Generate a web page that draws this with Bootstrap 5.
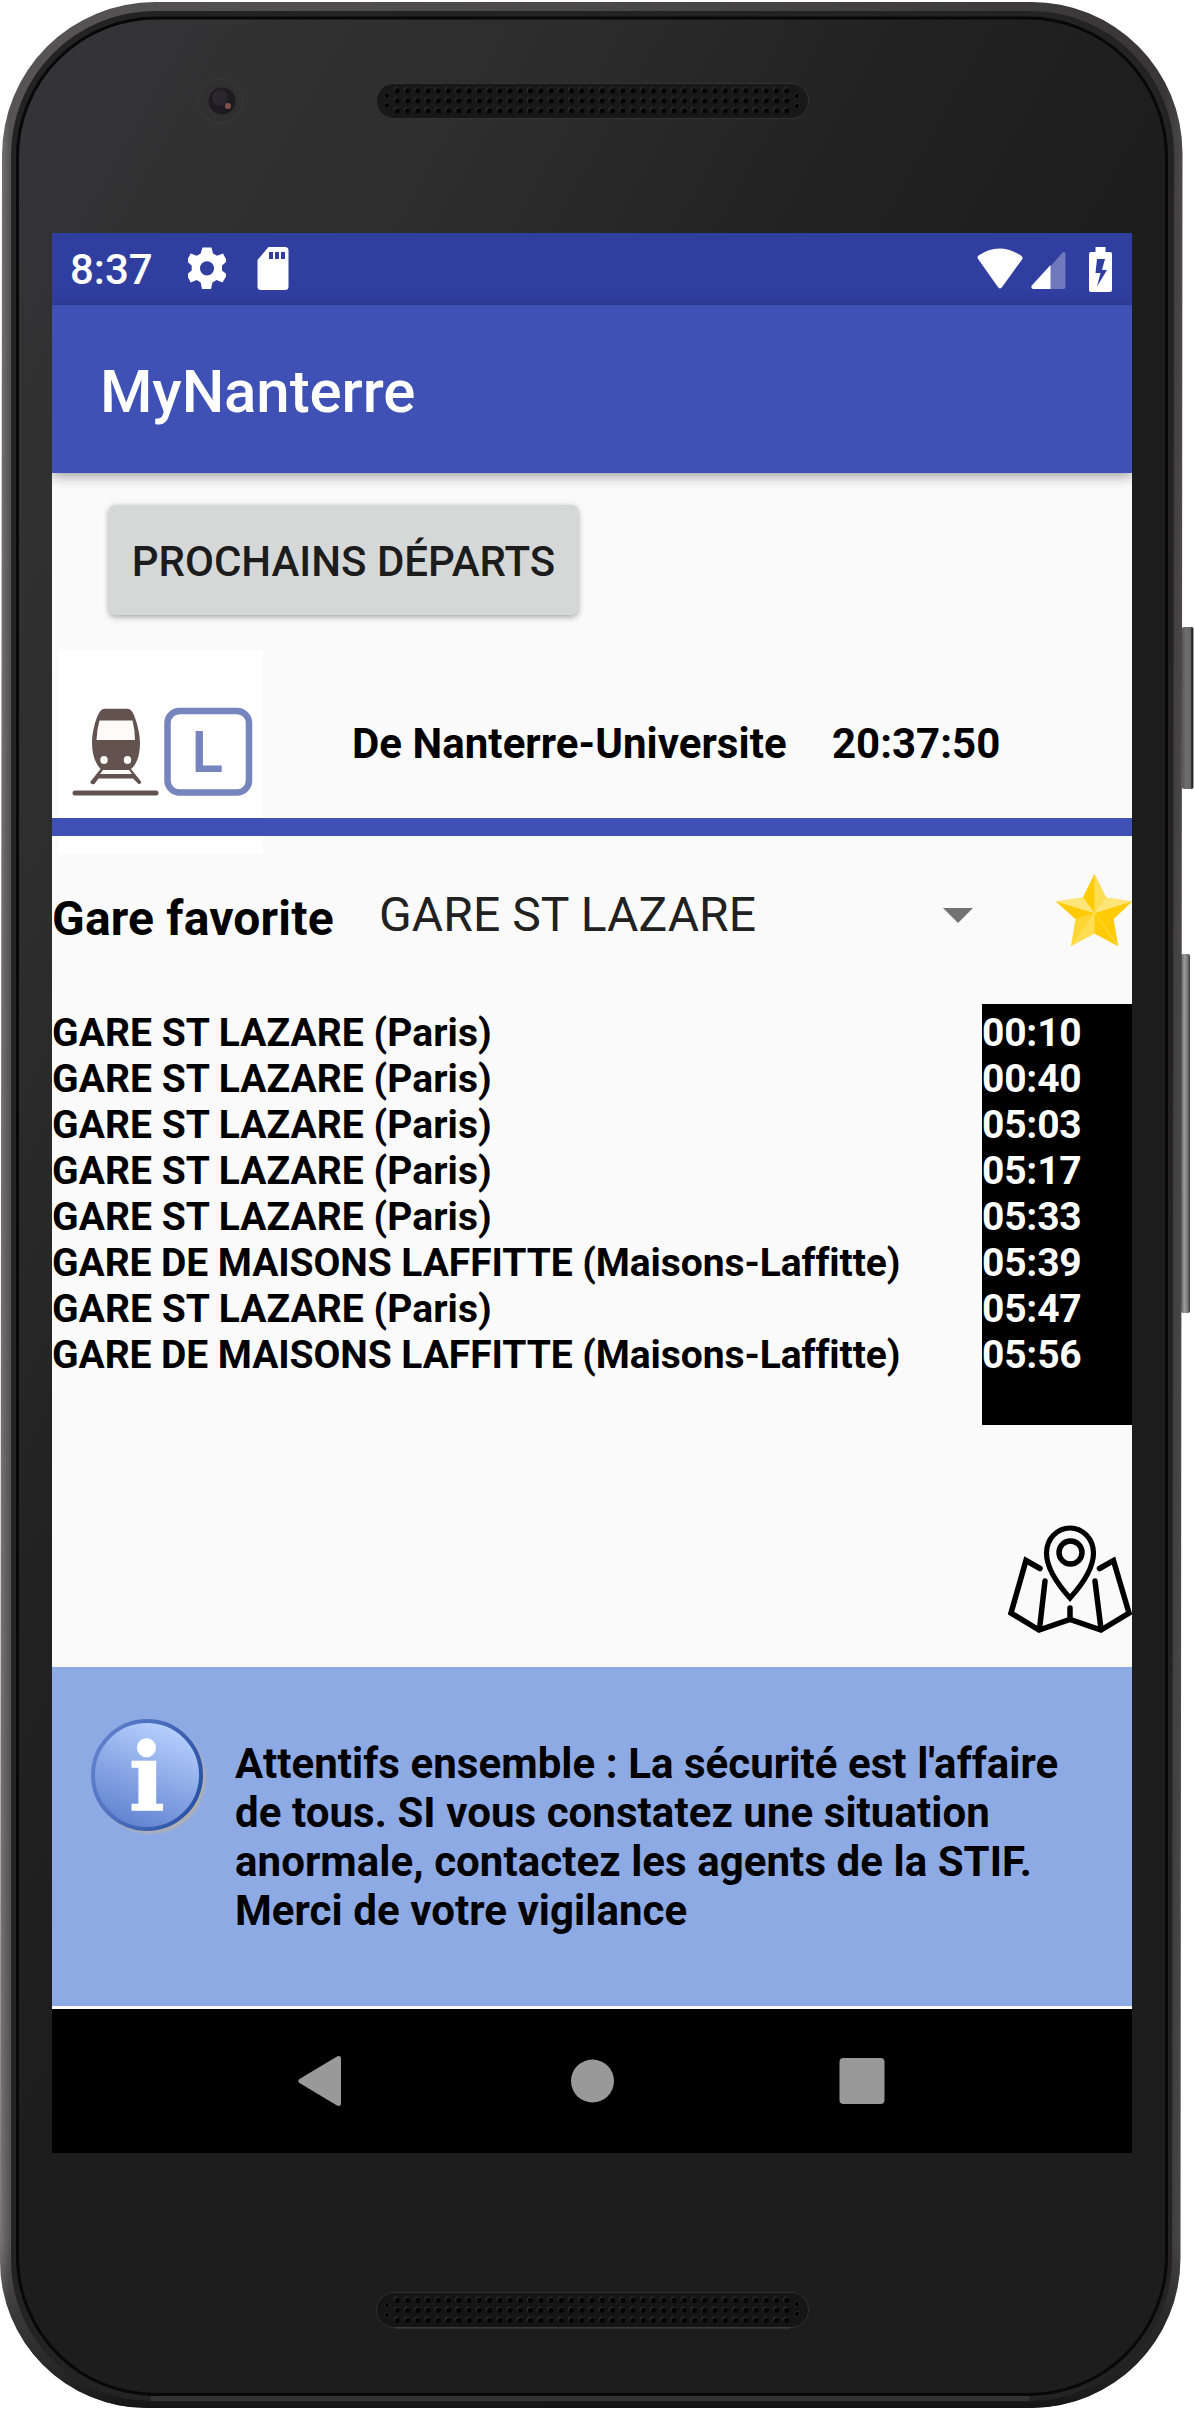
<!DOCTYPE html>
<html lang="fr">
<head>
<meta charset="utf-8">
<meta name="viewport" content="width=device-width, initial-scale=1">
<title>MyNanterre</title>
<link href="https://cdn.jsdelivr.net/npm/bootstrap@5.3.0/dist/css/bootstrap.min.css" rel="stylesheet">
<style>
  body { background:#fff; font-family:Roboto, sans-serif; color:#000; }
  .phone { width:1194px; height:2409px; padding:233px 62px 256px 52px; overflow:hidden; }
  .phone-shell { top:0; left:0; }
  .screen { width:1080px; height:1920px; background:#fafafa; }
  .status-bar { height:72px; background:#303f9f; padding:0 20px 0 18px; }
  .status-time { font-size:42px; font-weight:500; line-height:49px; width:100px; }
  .app-bar { height:168px; background:#3f51b5; padding:5px 48px 0; box-shadow:0 3px 12px rgba(0,0,0,.38); }
  .app-title { font-size:60px; font-weight:500; line-height:70px; color:#fff; letter-spacing:-.1px; }
  .btn-depart { margin:32px 0 0 57px; width:469px; height:110px; padding:2px 0 0; background:#d6d7d7; border:0; border-radius:6px;
    font-size:42px; font-weight:500; color:#1c1c1c; box-shadow:0 2px 6px rgba(0,0,0,.35); white-space:nowrap; }
  .origin-row { height:168px; margin-top:35px; padding-left:7px; font-size:42px; line-height:49px; }
  .origin-row > span { margin-top:69px; white-space:nowrap; }
  .origin-name { margin-left:89px; width:480px; letter-spacing:.05px; }
  .divider { height:18px; background:#3f51b5; }
  .fav-row { height:168px; font-size:48px; line-height:56px; }
  .fav-label { width:327px; padding-top:55px; white-space:nowrap; letter-spacing:.18px; }
  .fav-pick { width:564px; padding-top:51px; color:#212121; letter-spacing:.1px; }
  .board { height:421px; font-size:39px; line-height:46px; }
  .board ul { padding-top:6px; }
  .stops li { letter-spacing:.06px; }
  .stops li.long-name { letter-spacing:-.08px; }
  .times { width:150px; background:#000; color:#fff; letter-spacing:-.2px; }
  .map-row { height:242px; padding-top:99px; }
  .notice { height:339px; background:#8eaae5; padding:48px 60px 0 35px; }
  .notice p { font-size:42px; line-height:49px; margin:24px 0 0 25px; white-space:nowrap; letter-spacing:.06px; }
  .nav-keys { height:144px; margin-top:3px; background:#000; padding-right:3px; }
</style>
<script src="https://cdn.jsdelivr.net/npm/bootstrap@5.3.0/dist/js/bootstrap.bundle.min.js"></script>
</head>
<body>
<div class="phone position-relative">
  <svg class="phone-shell position-absolute" width="1194" height="2409" viewBox="0 0 1194 2409" aria-hidden="true">
    <defs>
      <linearGradient id="rim" x1="0" y1="0" x2="1" y2="0">
        <stop offset="0" stop-color="#777576"/><stop offset=".008" stop-color="#565455"/><stop offset=".5" stop-color="#4a4849"/><stop offset=".985" stop-color="#383637"/><stop offset="1" stop-color="#4a4849"/>
      </linearGradient>
      <linearGradient id="rimFoot" x1="0" y1="0" x2="0" y2="1">
        <stop offset=".93" stop-color="#1a1a1a" stop-opacity="0"/><stop offset=".99" stop-color="#1d1d1d" stop-opacity=".9"/><stop offset="1" stop-color="#151515"/>
      </linearGradient>
      <linearGradient id="glass" x1="0" y1="0" x2=".6" y2=".7">
        <stop offset="0" stop-color="#353537"/><stop offset=".35" stop-color="#2c2c2c"/><stop offset=".55" stop-color="#222"/><stop offset=".75" stop-color="#1d1d1d"/><stop offset="1" stop-color="#1d1d1d"/>
      </linearGradient>
      <linearGradient id="key" x1="0" y1="0" x2="1" y2="0">
        <stop offset="0" stop-color="#555"/><stop offset=".35" stop-color="#6f6f6f"/><stop offset=".75" stop-color="#666"/><stop offset=".85" stop-color="#222"/><stop offset="1" stop-color="#333"/>
      </linearGradient>
      <linearGradient id="key2" x1="0" y1="0" x2="1" y2="0">
        <stop offset="0" stop-color="#666"/><stop offset=".4" stop-color="#9a9b9b"/><stop offset=".75" stop-color="#777"/><stop offset="1" stop-color="#333"/>
      </linearGradient>
      <pattern id="holes" width="10.25" height="10" patternUnits="userSpaceOnUse">
        <circle cx="4.6" cy="4.4" r="2.7" fill="#3a3a3a"/><circle cx="5.2" cy="5.2" r="2.6" fill="#040404"/>
      </pattern>
    </defs>
    <rect x="1182" y="627" width="11.5" height="162" rx="2" fill="url(#key)"/>
    <rect x="1181" y="954" width="9" height="359" rx="2" fill="url(#key2)"/>
    <path d="M155 2H1031A151 151 0 0 1 1182.5 153L1180.500 2258A150 150 0 0 1 1031 2408H147A147 147 0 0 1 0 2261L2 155A153 153 0 0 1 155 2Z" fill="url(#rim)"/>
    <path d="M155 2H1031A151 151 0 0 1 1182.5 153L1180.500 2258A150 150 0 0 1 1031 2408H147A147 147 0 0 1 0 2261L2 155A153 153 0 0 1 155 2Z" fill="url(#rimFoot)"/>
    <path d="M155 11H1031A143 143 0 0 1 1174 154L1172 2258A143 143 0 0 1 1029 2401H151A140 140 0 0 1 11 2261V155A144 144 0 0 1 155 11Z" fill="#242324"/>
    <path d="M151 2398.500H1029" stroke="#343434" stroke-width="5" fill="none"/>
    <path d="M157 18H1027A139 139 0 0 1 1166.500 157V2256A138 138 0 0 1 1028 2394.500H155A138 138 0 0 1 17.500 2257V157A139 139 0 0 1 157 18Z" fill="url(#glass)" stroke="#080808" stroke-width="3"/>
    <circle cx="220.500" cy="101" r="22" fill="#303030" stroke="#3a3a3a"/>
    <circle cx="222" cy="101" r="13.500" fill="#1d1b20"/><circle cx="220" cy="98" r="8" fill="#29262e"/><circle cx="228" cy="106" r="3" fill="#80504c"/>
    <rect x="376.500" y="83.500" width="432" height="35" rx="17.500" fill="#181818" stroke="#333"/>
    <g transform="translate(392 85.500)"><rect width="399.700" height="30" fill="url(#holes)"/></g>
    <rect x="376.500" y="2292.500" width="432" height="35" rx="17.500" fill="#151515" stroke="#303030"/>
    <path d="M395 2328H790" stroke="#444" fill="none"/>
    <g transform="translate(392 2295)"><rect width="399.700" height="30" fill="url(#holes)"/></g>
    <g fill="#040404" stroke="#2c2c2c" stroke-width=".7"><circle cx="387" cy="95.500" r="2.700"/><circle cx="387" cy="105.500" r="2.700"/><circle cx="797" cy="96" r="2.700"/><circle cx="797" cy="106" r="2.700"/><circle cx="387" cy="2305" r="2.700"/><circle cx="387" cy="2315" r="2.700"/><circle cx="797" cy="2304" r="2.700"/><circle cx="797" cy="2314" r="2.700"/></g>
  </svg>

  <main class="screen position-relative d-flex flex-column overflow-hidden">
    <div class="status-bar d-flex align-items-center text-white flex-shrink-0">
      <span class="status-time">8:37</span>
      <svg width="38" height="44" viewBox="0 0 38 44" style="margin-left:18px"><path fill="#fff" fill-rule="evenodd" d="M14.500 0.500h9l1.500 6 4 2.300 6-2.300 4 7.500-5 4.500v5l5 4.200-4.500 7.800-6-2.400-4 2.400-1.500 6.500h-9l-1.300-6.500-4-2.400-6 2.400L-1.300 27.700l5-4.200v-5l-5-4.500 4-7.500 6 2.300 4-2.300zM19 14.200a7 7.200 0 1 0 0 14.400a7 7.200 0 1 0 0-14.400z"/></svg>
      <svg width="32" height="44" viewBox="0 0 32 44" style="margin-left:31px"><path fill="#fff" fill-rule="evenodd" d="M11.500 0H28a3.500 3.500 0 0 1 3.500 3.500v36A3.500 3.500 0 0 1 28 43H4A3.500 3.500 0 0 1 .5 39.500V13zM12 5v7h4V5zM18 5v7h4V5zM24 5v7h4V5z"/></svg>
      <svg class="ms-auto" width="46" height="44" viewBox="0 0 46 44"><path fill="#fff" d="M1.500 11.500Q-.5 9.500 1.500 7.500Q22-6.500 44 7.500Q46.500 9.500 45 11.500L25.500 38.500Q23 42.500 20.500 38.500Z" transform="translate(0 1)"/></svg>
      <svg width="35" height="44" viewBox="0 0 35 44" style="margin-left:8px"><path fill="#7079bc" d="M19 20L31 6Q34 3.500 34.500 7V40Q34.500 42 32.500 42H19z"/><path fill="#fff" d="M19.500 18V42H2Q-.5 41 .8 38.500z"/></svg>
      <svg width="23" height="45" viewBox="0 0 23 45" style="margin-left:23px"><path fill="#fff" fill-rule="evenodd" d="M6.500 0h10v5H21a2 2 0 0 1 2 2v36a2 2 0 0 1-2 2H2a2 2 0 0 1-2-2V7a2 2 0 0 1 2-2h4.500zM8 12L6.500 26h5L8 39.500L18 23h-5L16 12z"/></svg>
    </div>
    <nav class="navbar app-bar position-relative flex-shrink-0"><h1 class="app-title m-0">MyNanterre</h1></nav>
    <button type="button" class="btn btn-depart flex-shrink-0">PROCHAINS DÉPARTS</button>

    <section class="origin-row d-flex align-items-start fw-bold flex-shrink-0">
      <svg class="flex-shrink-0" width="204" height="204" viewBox="0 0 204 204">
        <rect width="204" height="204" fill="#fff"/>
        <path fill="#63534f" d="M45 58.700H69Q72 59 74.500 64C78 72 81 84 81 93C81 105 78 114 72 119L82 131.500Q82.500 134.500 79.500 134L74 128.500H39.500L35.500 134Q32 135 31.200 132L41.500 119C36 113 33 104 33 93C33 83 36 71 39.500 64Q42 59 45 58.700Z"/>
        <path fill="#fdfaf8" d="M40.500 70.500H73.500Q76 80 76 90H37.500Q38 79 40.500 70.500ZM44 120H70L73 124H41Z"/>
        <ellipse cx="45" cy="110" rx="3.700" ry="3.900" fill="#fff"/><ellipse cx="68.500" cy="110" rx="3.700" ry="3.900" fill="#fff"/>
        <path d="M16 143H97" stroke="#63534f" stroke-width="5" stroke-linecap="round"/>
        <rect x="108.500" y="61" width="81.500" height="81.500" rx="12" fill="none" stroke="#7685bd" stroke-width="6.500"/>
        <text transform="translate(133.200 122.300) scale(.86 1)" font-family="Liberation Sans, sans-serif" font-weight="700" font-size="59" fill="#7685bd">L</text>
      </svg>
      <span class="origin-name">De Nanterre-Universite</span>
      <span>20:37:50</span>
    </section>
    <div class="divider position-relative flex-shrink-0"></div>

    <section class="fav-row d-flex flex-shrink-0">
      <div class="fav-label fw-bold">Gare favorite</div>
      <div class="fav-pick">GARE ST LAZARE</div>
      <svg width="30" height="15" viewBox="0 0 30 15" style="margin-top:72px"><path fill="#737373" d="M0 0H30L15 15Z"/></svg>
      <svg class="ms-auto" width="76" height="72" viewBox="0 0 76 72" style="margin-top:38px">
        <path fill="#ffd633" d="M38.500 0L50 23.500L76 27.500L57.500 45L62 72L38.500 59.500L15 72L19.500 45L0 27.500L27 23.500Z"/>
        <path fill="#ffcb05" d="M38.500 0V39L27 23.500ZM76 27.500L57.500 45L38.500 39ZM57.500 45L62 72L38.500 59.500V39ZM0 27.500L19.500 45L38.500 39Z"/>
        <path fill="#ffe57a" d="M50 23.500L76 27.500L38.500 39ZM27 23.500L0 27.500L38.500 39Z"/>
        <path fill="#ffdd55" d="M38.500 0L50 23.500L38.500 39ZM15 72L38.500 59.500V39Z"/>
        <path d="M38.500 39L62 72" stroke="#ffdc50" stroke-width="1"/>
      </svg>
    </section>

    <section class="board d-flex fw-bold flex-shrink-0">
      <ul class="list-unstyled mb-0 flex-grow-1 stops">
        <li>GARE ST LAZARE (Paris)</li><li>GARE ST LAZARE (Paris)</li><li>GARE ST LAZARE (Paris)</li><li>GARE ST LAZARE (Paris)</li><li>GARE ST LAZARE (Paris)</li>
        <li class="long-name">GARE DE MAISONS LAFFITTE (Maisons-Laffitte)</li><li>GARE ST LAZARE (Paris)</li><li class="long-name">GARE DE MAISONS LAFFITTE (Maisons-Laffitte)</li>
      </ul>
      <ul class="list-unstyled mb-0 times">
        <li>00:10</li><li>00:40</li><li>05:03</li><li>05:17</li><li>05:33</li><li>05:39</li><li>05:47</li><li>05:56</li>
      </ul>
    </section>

    <section class="map-row d-flex justify-content-end align-items-start flex-shrink-0">
      <svg width="124" height="111" viewBox="0 0 124 111" fill="none" stroke="#000" stroke-width="5.500" stroke-linecap="round">
        <path d="M62 74Q38.500 48 38.500 29A23.500 25 0 0 1 85.500 29Q85.500 48 62 74Z" stroke-width="5.200" stroke-linejoin="miter"/>
        <circle cx="62.500" cy="28.500" r="11.500"/>
        <path d="M32 44.500L18 36.500L3 89L31 106L62 95.500L93 106L121 89L105.500 36.500L91.500 44.500M37 57L31.500 105M87 57L93 105M62 84V95"/>
      </svg>
    </section>

    <section class="notice d-flex align-items-start flex-shrink-0">
      <svg class="flex-shrink-0" width="123" height="123" viewBox="0 0 123 123">
        <defs>
          <linearGradient id="disc" x1=".7" y1="0" x2=".3" y2="1"><stop offset="0" stop-color="#b9d3ff"/><stop offset="1" stop-color="#5f80cf"/></linearGradient>
          <linearGradient id="ring" x1="0" y1=".3" x2="1" y2=".7"><stop offset="0" stop-color="#6080cd"/><stop offset="1" stop-color="#2a52a5"/></linearGradient>
          <filter id="soft" x="-10%" y="-10%" width="120%" height="120%"><feGaussianBlur stdDeviation="1.500"/></filter>
        </defs>
        <circle cx="63.500" cy="63.500" r="55" fill="#b0b0b0" filter="url(#soft)"/>
        <circle cx="60" cy="60" r="54" fill="url(#disc)" stroke="url(#ring)" stroke-width="4"/>
        <text x="60" y="94.500" text-anchor="middle" font-family="DejaVu Serif, serif" font-weight="700" font-size="93" fill="#fff" stroke="#fff" stroke-width="1.600">i</text>
      </svg>
      <p class="fw-bold">Attentifs ensemble : La sécurité est l'affaire<br>de tous. SI vous constatez une situation<br>anormale, contactez les agents de la STIF.<br>Merci de votre vigilance</p>
    </section>

    <div class="nav-keys d-flex flex-shrink-0 align-items-center justify-content-center">
      <svg width="588" height="52" viewBox="0 0 588 52" fill="#999">
        <path d="M40 1.500Q44 0 44 4V48Q44 52 40 50.500L2.500 28Q0 26 2.500 24Z"/>
        <circle cx="295.500" cy="26" r="21.500"/><rect x="542.500" y="3" width="45" height="46" rx="4"/>
      </svg>
    </div>
  </main>
</div>
</body>
</html>
